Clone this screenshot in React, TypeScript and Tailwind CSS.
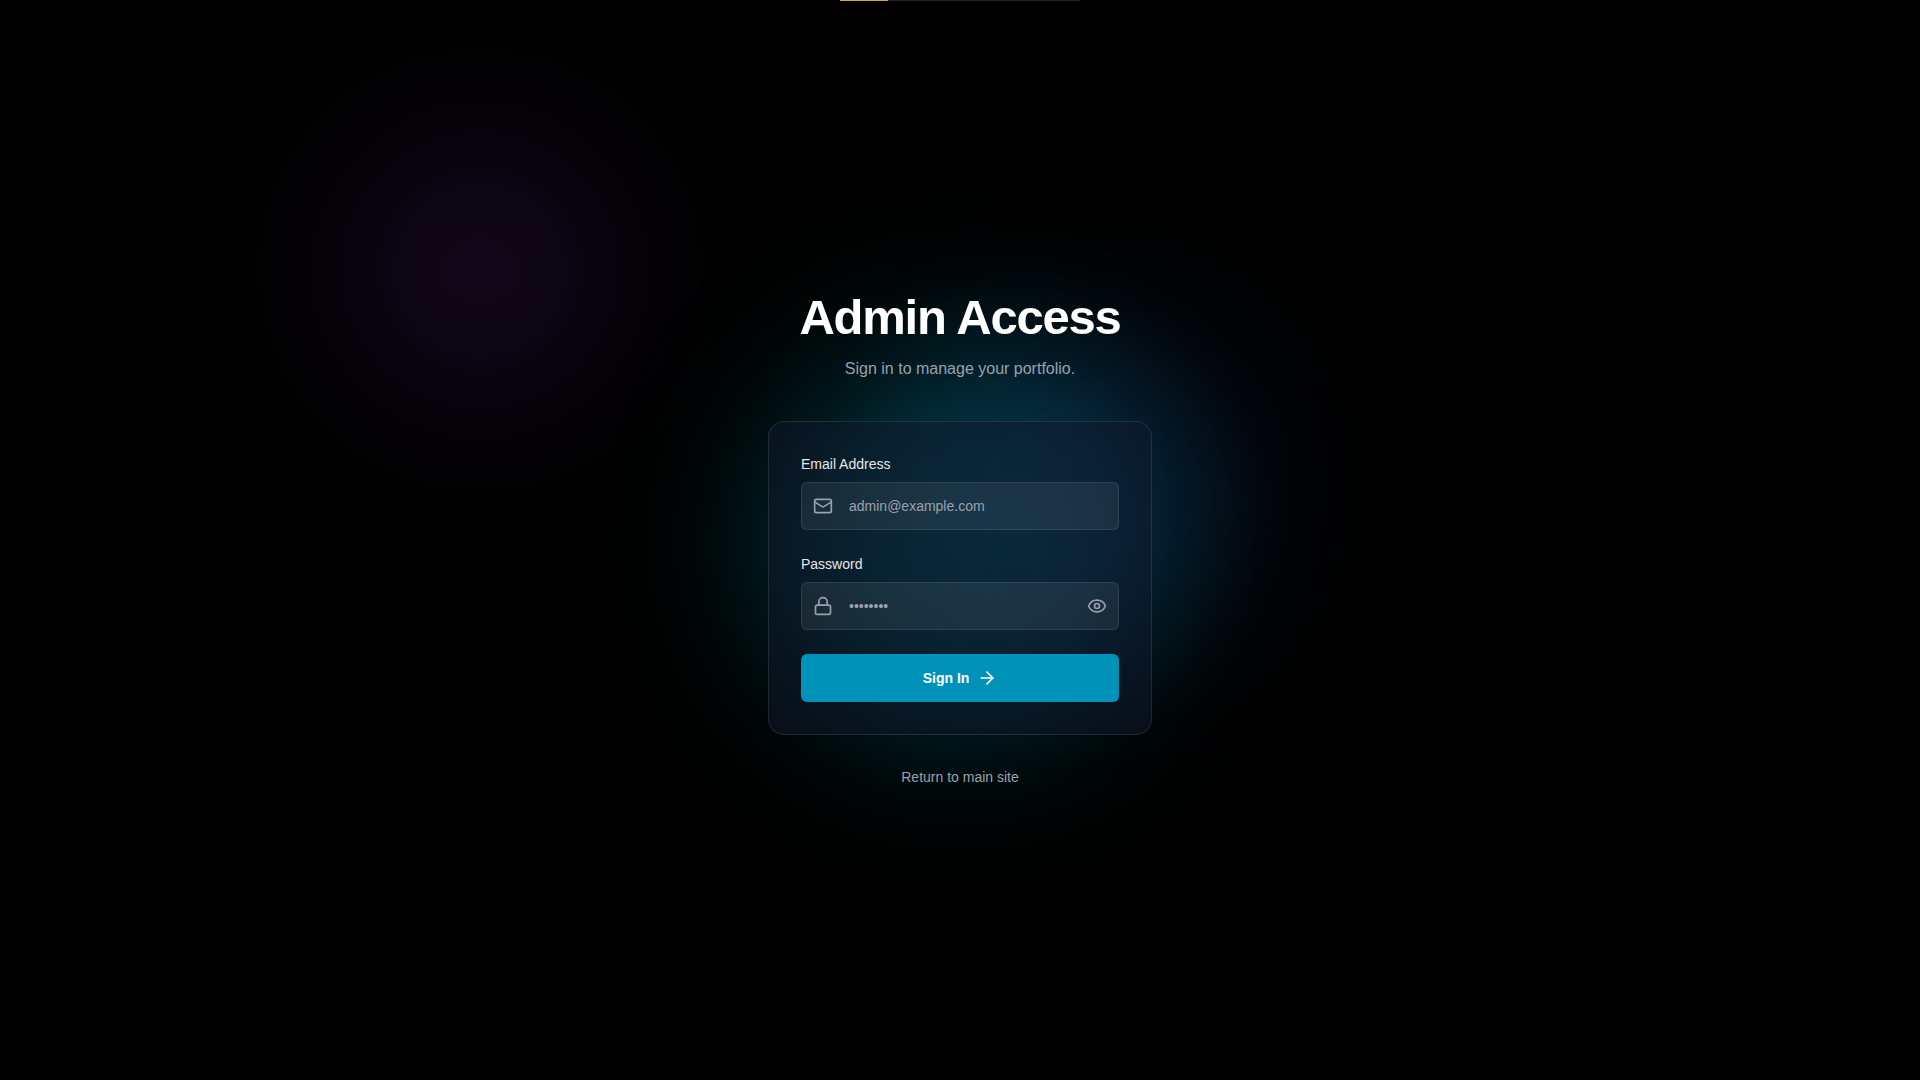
import { useState } from "react";
import type { FormEvent, ReactNode } from "react";
import { ArrowRight, Eye, EyeOff, Lock, Mail } from "lucide-react";

const inputClass =
  "h-12 w-full rounded-md border border-white/10 bg-white/[0.07] px-[47px] text-sm text-white outline-none placeholder:text-gray-400 focus:border-cyan-500";

interface FieldProps {
  id: string;
  label: string;
  icon: ReactNode;
  children: ReactNode;
}

function Field({ id, label, icon, children }: FieldProps) {
  return (
    <div className="flex flex-col gap-2">
      <label htmlFor={id} className="text-sm font-medium text-gray-200">
        {label}
      </label>
      <div className="relative">
        <span className="pointer-events-none absolute inset-y-0 left-3 flex items-center text-gray-400">
          {icon}
        </span>
        {children}
      </div>
    </div>
  );
}

export default function App() {
  const [email, setEmail] = useState("");
  const [password, setPassword] = useState("");
  const [showPassword, setShowPassword] = useState(false);
  const progress = 20;

  const handleSubmit = (e: FormEvent) => {
    e.preventDefault();
  };

  return (
    <main className="relative isolate flex min-h-screen items-center justify-center overflow-hidden bg-black font-['Liberation_Sans',Arial,sans-serif]">
      {/* Background glows */}
      <div className="pointer-events-none absolute inset-0 -z-10" aria-hidden="true">
        <div className="absolute top-1/4 left-1/4 size-72 -translate-1/2 rounded-full bg-purple-500/10 blur-[72px]" />
        <div className="absolute top-1/2 left-1/2 size-96 -translate-1/2 rounded-full bg-cyan-500/28 blur-[80px]" />
        <div className="absolute top-[45%] left-[57%] size-80 -translate-1/2 rounded-full bg-blue-500/12 blur-[72px]" />
      </div>

      {/* Progress line */}
      <div className="absolute top-0 left-1/2 h-px w-60 -translate-x-1/2 bg-white/15">
        <div
          className="h-full bg-[#d4a72c]"
          style={{ width: `${progress}%` }}
          role="progressbar"
          aria-label="Progress"
          aria-valuenow={progress}
          aria-valuemin={0}
          aria-valuemax={100}
        />
      </div>

      <div className="flex w-full max-w-sm flex-col">
        <header className="mb-10 text-center">
          <h1 className="text-[49px] leading-[48px] font-bold tracking-tight text-white">
            Admin Access
          </h1>
          <p className="mt-4 text-base text-gray-400">Sign in to manage your portfolio.</p>
        </header>

        <form
          onSubmit={handleSubmit}
          className="flex flex-col gap-6 rounded-2xl border border-white/10 bg-slate-900/50 p-8"
        >
          <Field id="email" label="Email Address" icon={<Mail className="size-5" />}>
            <input
              id="email"
              type="email"
              value={email}
              onChange={(e) => setEmail(e.target.value)}
              placeholder="admin@example.com"
              className={inputClass}
            />
          </Field>

          <Field id="password" label="Password" icon={<Lock className="size-5" />}>
            <input
              id="password"
              type={showPassword ? "text" : "password"}
              value={password}
              onChange={(e) => setPassword(e.target.value)}
              placeholder="••••••••"
              className={inputClass}
            />
            <button
              type="button"
              onClick={() => setShowPassword(!showPassword)}
              className="absolute inset-y-0 right-3 flex items-center text-gray-400 hover:text-white"
              aria-label={showPassword ? "Hide password" : "Show password"}
            >
              {showPassword ? <EyeOff className="size-5" /> : <Eye className="size-5" />}
            </button>
          </Field>

          <button
            type="submit"
            className="flex h-12 items-center justify-center gap-2 rounded-md bg-[#0092b8] text-sm font-bold text-white hover:bg-cyan-500"
          >
            Sign In
            <ArrowRight className="size-5" aria-hidden="true" />
          </button>
        </form>

        <a href="/" className="mt-8 self-center text-sm text-gray-400 hover:text-white">
          Return to main site
        </a>
      </div>
    </main>
  );
}
